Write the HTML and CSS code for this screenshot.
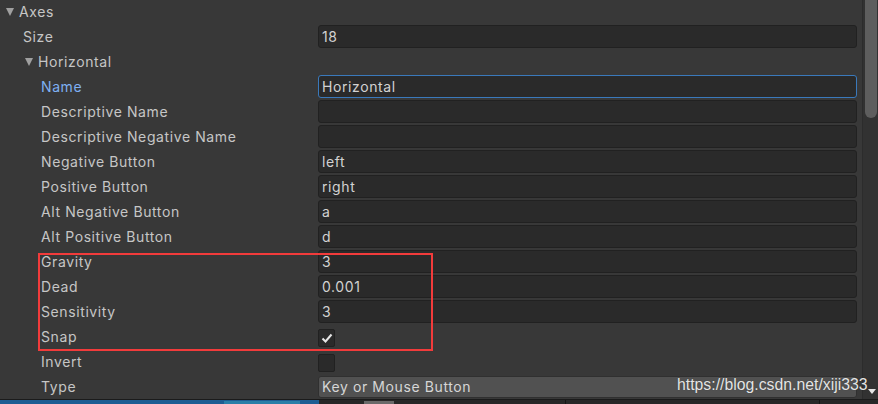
FILE: index.html
```html
<!DOCTYPE html>
<html>
<head>
<meta charset="utf-8">
<link rel="stylesheet" href="styles.css">
</head>
<body>
<div class="page">
  <div class="inspector">
    <div class="content">
      <div class="row"><div class="label l0"><span class="tri"></span>Axes</div><div></div></div>
      <div class="row"><div class="label l1">Size</div><div class="field">18</div></div>
      <div class="row"><div class="label l1t"><span class="tri"></span>Horizontal</div><div></div></div>
      <div class="row"><div class="label l2 active">Name</div><div class="field focus">Horizontal</div></div>
      <div class="row"><div class="label l2">Descriptive Name</div><div class="field"></div></div>
      <div class="row"><div class="label l2">Descriptive Negative Name</div><div class="field"></div></div>
      <div class="row"><div class="label l2">Negative Button</div><div class="field">left</div></div>
      <div class="row"><div class="label l2">Positive Button</div><div class="field">right</div></div>
      <div class="row"><div class="label l2">Alt Negative Button</div><div class="field">a</div></div>
      <div class="row"><div class="label l2">Alt Positive Button</div><div class="field">d</div></div>
      <div class="row"><div class="label l2">Gravity</div><div class="field">3</div></div>
      <div class="row"><div class="label l2">Dead</div><div class="field">0.001</div></div>
      <div class="row"><div class="label l2">Sensitivity</div><div class="field">3</div></div>
      <div class="row"><div class="label l2">Snap</div><div class="cell"><div class="check"><svg width="12" height="10" viewBox="0 0 12 10"><polyline points="1.5,5.5 4.5,8.5 10.5,1.5" fill="none" stroke="#e6e6e6" stroke-width="2"/></svg></div></div></div>
      <div class="row"><div class="label l2">Invert</div><div class="cell"><div class="check"></div></div></div>
      <div class="row"><div class="label l2">Type</div><div class="dropdown">Key or Mouse Button</div></div>
      <div class="redbox"></div>
    </div>
    <div class="scrollbar"><div class="thumb"></div></div>
  </div>
  <div class="bottombar">
    <div class="bb-left"><div class="bb-pattern"></div></div>
    <div class="bb-right"><div class="bb-icon"></div><div class="bb-sep"></div><div class="bb-sep2"></div></div>
  </div>
  <div class="watermark">https://blog.csdn.net/xiji333<span class="arrow"></span></div>
</div>
</body>
</html>
```
FILE: styles.css
```css
html, body {
  margin: 0;
  padding: 0;
  background: #383838;
}
.page {
  position: relative;
  width: 878px;
  height: 404px;
  overflow: hidden;
  font-family: Inter, "Noto Sans", sans-serif;
  font-size: 14px;
  letter-spacing: 0.6px;
  color: #c6c6c6;
}
.inspector {
  display: flex;
  height: 399px;
  border-bottom: 1px solid #1b1b1b;
  overflow: hidden;
}
.content {
  position: relative;
  flex: 1;
  padding-right: 5px;
}
.row {
  display: grid;
  grid-template-columns: 318px 1fr;
  height: 25px;
  align-items: start;
}
.label {
  display: flex;
  align-items: center;
  height: 24px;
  line-height: 24px;
  white-space: nowrap;
}
.l0 { padding-left: 6px; }
.l1 { padding-left: 23px; }
.l1t { padding-left: 25px; }
.l2 { padding-left: 41px; }
.active { color: #7fb0f2; }
.tri {
  width: 0;
  height: 0;
  border-left: 4.5px solid transparent;
  border-right: 4.5px solid transparent;
  border-top: 8px solid #a0a0a0;
  margin-right: 5px;
  margin-top: -1px;
}
.field {
  box-sizing: border-box;
  height: 23px;
  line-height: 21px;
  background: #2a2a2a;
  border: 1px solid #212121;
  border-radius: 3px;
  padding-left: 3px;
  color: #d2d2d2;
}
.field.focus {
  border-color: #3a79bb;
}
.cell {
  display: flex;
  align-items: center;
  height: 25px;
}
.check {
  box-sizing: border-box;
  width: 17px;
  height: 18px;
  background: #2a2a2a;
  border: 1px solid #212121;
  border-radius: 2px;
  display: flex;
  align-items: center;
  justify-content: center;
}
.dropdown {
  box-sizing: border-box;
  height: 22px;
  margin-top: 1px;
  line-height: 20px;
  background: #515151;
  border: 1px solid #303030;
  border-radius: 3px;
  padding-left: 3px;
  color: #d6d6d6;
}
.redbox {
  position: absolute;
  left: 38px;
  top: 253px;
  width: 391px;
  height: 94px;
  border: 2px solid #f23b3b;
}
.scrollbar {
  width: 16px;
  background: #323232;
  border-left: 1px solid #2c2c2c;
  box-sizing: border-box;
  padding-left: 2px;
}
.thumb {
  width: 12px;
  height: 118px;
  background: #5e5e5e;
  border-radius: 0 0 6px 6px;
}
.bottombar {
  display: flex;
  height: 4px;
}
.bb-left {
  width: 319px;
  background: #1d5d93;
  position: relative;
}
.bb-pattern {
  position: absolute;
  left: 224px;
  top: 1px;
  width: 76px;
  height: 3px;
  background: #2a7fa8;
}
.bb-right {
  flex: 1;
  background: #282828;
  position: relative;
}
.bb-icon {
  position: absolute;
  left: 45px;
  top: 1px;
  width: 30px;
  height: 3px;
  background: #6a6a6a;
}
.bb-sep {
  position: absolute;
  left: 246px;
  top: 0;
  width: 1px;
  height: 4px;
  background: #151515;
}
.bb-sep2 {
  position: absolute;
  left: 500px;
  top: 0;
  width: 1px;
  height: 4px;
  background: #151515;
}
.watermark {
  position: absolute;
  left: 677px;
  top: 375px;
  font-family: "Liberation Sans", Arial, sans-serif;
  font-size: 15.8px;
  letter-spacing: 0;
  color: #e4e4e4;
  text-shadow: 0 0 1px rgba(0,0,0,0.4);
  white-space: nowrap;
  line-height: 20px;
}
.arrow {
  display: inline-block;
  width: 0;
  height: 0;
  border-left: 4px solid transparent;
  border-right: 4px solid transparent;
  border-top: 5px solid #e4e4e4;
  vertical-align: -4px;
}
```
